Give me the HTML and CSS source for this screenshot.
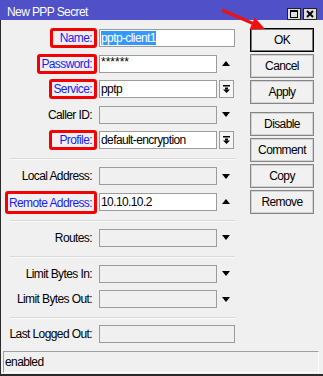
FILE: index.html
```html
<!DOCTYPE html>
<html lang="en">
<head>
    <meta charset="UTF-8">
    <meta name="viewport" content="width=device-width, initial-scale=1.0">
    <title>New PPP Secret</title>
    <link rel="stylesheet" href="styles.css">
</head>
<body>

<div class="window">
    <div class="titlebar">
        <span class="title">New PPP Secret</span>
        <div class="controls">
            <svg class="ctrl" width="14" height="12" viewBox="0 0 14 12">
                <rect x=".5" y=".5" width="13" height="11" fill="#dedede" stroke="#222"/>
                <rect x="3.5" y="2.5" width="7" height="7" fill="none" stroke="#000"/>
                <rect x="3" y="2" width="8" height="2" fill="#000"/>
            </svg>
            <svg class="ctrl" width="14" height="12" viewBox="0 0 14 12">
                <rect x=".5" y=".5" width="13" height="11" fill="#dedede" stroke="#222"/>
                <path d="M4 3l6 6M10 3l-6 6" stroke="#000" stroke-width="1.8"/>
            </svg>
        </div>
    </div>

    <div class="main">
        <div class="content">
            <div class="form">
                <div class="group">
                    <div class="row">
                        <div class="lbl"><span class="mark far">Name:</span></div>
                        <div class="field wide"><span class="sel">pptp-client1</span></div>
                    </div>
                    <div class="row">
                        <div class="lbl"><span class="mark">Password:</span></div>
                        <div class="field pass">******</div>
                        <span class="tri up"></span>
                    </div>
                    <div class="row">
                        <div class="lbl"><span class="mark">Service:</span></div>
                        <div class="field">pptp</div>
                        <span class="dd">
                            <svg width="7" height="8" viewBox="0 0 7 8">
                                <rect x="0" y="0" width="7" height="1.5" fill="#000"/>
                                <rect x="2" y="2.5" width="3" height="2" fill="#000"/>
                                <polygon points="0,4.5 7,4.5 3.5,8" fill="#000"/>
                            </svg>
                        </span>
                    </div>
                    <div class="row">
                        <div class="lbl">Caller ID:</div>
                        <div class="field off"></div>
                        <span class="tri down"></span>
                    </div>
                    <div class="row">
                        <div class="lbl"><span class="mark far">Profile:</span></div>
                        <div class="field">default-encryption</div>
                        <span class="dd">
                            <svg width="7" height="8" viewBox="0 0 7 8">
                                <rect x="0" y="0" width="7" height="1.5" fill="#000"/>
                                <rect x="2" y="2.5" width="3" height="2" fill="#000"/>
                                <polygon points="0,4.5 7,4.5 3.5,8" fill="#000"/>
                            </svg>
                        </span>
                    </div>
                </div>

                <div class="sep"></div>

                <div class="group">
                    <div class="row">
                        <div class="lbl">Local Address:</div>
                        <div class="field off"></div>
                        <span class="tri down"></span>
                    </div>
                    <div class="row">
                        <div class="lbl"><span class="mark tall">Remote Address:</span></div>
                        <div class="field">10.10.10.2</div>
                        <span class="tri up"></span>
                    </div>
                </div>

                <div class="sep"></div>

                <div class="group">
                    <div class="row">
                        <div class="lbl">Routes:</div>
                        <div class="field off"></div>
                        <span class="tri down"></span>
                    </div>
                </div>

                <div class="sep"></div>

                <div class="group">
                    <div class="row">
                        <div class="lbl">Limit Bytes In:</div>
                        <div class="field off"></div>
                        <span class="tri down"></span>
                    </div>
                    <div class="row">
                        <div class="lbl">Limit Bytes Out:</div>
                        <div class="field off"></div>
                        <span class="tri down"></span>
                    </div>
                </div>

                <div class="sep last"></div>

                <div class="group">
                    <div class="row">
                        <div class="lbl">Last Logged Out:</div>
                        <div class="field wide off"></div>
                    </div>
                </div>
            </div>

            <div class="buttons">
                <div class="btn default">OK</div>
                <div class="btn">Cancel</div>
                <div class="btn">Apply</div>
                <div class="btn spaced">Disable</div>
                <div class="btn">Comment</div>
                <div class="btn">Copy</div>
                <div class="btn">Remove</div>
            </div>
        </div>

        <div class="status">enabled</div>
    </div>

    <!-- red annotation arrow pointing at OK -->
    <svg class="pointer" width="323" height="40" viewBox="0 0 323 40">
        <line x1="222" y1="10" x2="253" y2="23.5" stroke="#f01010" stroke-width="3"/>
        <polygon points="265,29 249.5,29.5 254.8,17.6" fill="#f01010"/>
    </svg>
</div>

</body>
</html>
```

FILE: styles.css
```css
body {
    margin: 0;
    font-family: "Liberation Sans", Arial, sans-serif;
    font-size: 12px;
    letter-spacing: -0.6px;
    color: #000;
    background: #f0f0f0;
}
.window {
    position: relative;
    width: 323px;
    height: 376px;
    display: flex;
    flex-direction: column;
    background: #f0f0f0;
}
.titlebar {
    height: 20px;
    box-sizing: border-box;
    padding: 5px 6px 0 7px;
    background: #5050c8;
    display: flex;
    align-items: flex-start;
}
.title {
    flex: 1;
    color: #fff;
    line-height: 14px;
}
.controls {
    display: flex;
    gap: 2px;
    margin-top: 3px;
}
.ctrl {
    display: block;
}
.main {
    flex: 1;
    display: flex;
    flex-direction: column;
    border-left: 1px solid #2a2a2a;
    border-bottom: 2px solid #2a2a2a;
}
.content {
    display: flex;
    padding-top: 9px;
}
.form {
    width: 234px;
}
.group {
    display: flex;
    flex-direction: column;
    gap: 7.5px;
}
.row {
    display: flex;
    align-items: center;
    height: 18px;
}
.lbl {
    width: 91px;
    margin-right: 7px;
    display: flex;
    justify-content: flex-end;
    align-items: center;
    white-space: nowrap;
}
.mark {
    display: flex;
    align-items: center;
    height: 20px;
    box-sizing: border-box;
    border: 3px solid #f40000;
    border-radius: 3px;
    padding: 0 2px 0 1px;
    margin-right: -5px;
    color: #1c1cf0;
}
.mark.far {
    padding-left: 7px;
}
.mark.tall {
    height: 23px;
    margin-top: 2px;
}
.field {
    width: 118px;
    height: 18px;
    box-sizing: border-box;
    border: 1px solid #9c9c9c;
    background: #fff;
    padding-left: 1px;
    line-height: 16px;
    white-space: nowrap;
    overflow: hidden;
}
.field.wide {
    width: 136px;
}
.field.off {
    background: #f0f0f0;
}
.field.pass {
    letter-spacing: 0;
    line-height: 13px;
}
.sel {
    display: inline-block;
    background: #3399ff;
    color: #fff;
    line-height: 14px;
    margin-top: 1px;
    vertical-align: top;
}
.tri {
    width: 18px;
    display: flex;
    justify-content: center;
    align-items: center;
}
.tri::before {
    content: "";
    border-left: 4.5px solid transparent;
    border-right: 4.5px solid transparent;
}
.tri.up::before {
    border-bottom: 5px solid #000;
}
.tri.down::before {
    border-top: 5px solid #000;
}
.dd {
    width: 15px;
    height: 18px;
    margin-left: 2px;
    box-sizing: border-box;
    border: 1px solid #9c9c9c;
    background: #f6f6f6;
    display: flex;
    justify-content: center;
    align-items: center;
}
.dd svg {
    display: block;
}
.sep {
    width: 225px;
    height: 1px;
    margin: 9px 0 8px 9px;
    background: #d8d8d8;
    box-shadow: 0 1px 0 #fbfbfb;
}
.sep.last {
    margin-bottom: 7px;
}
.buttons {
    width: 64px;
    margin: -1px 0 0 15px;
    display: flex;
    flex-direction: column;
    gap: 2px;
}
.btn {
    height: 24px;
    box-sizing: border-box;
    border: 1px solid #858585;
    box-shadow: inset 0 0 0 1px #d2d2d2;
    background: #f1f1f1;
    display: flex;
    justify-content: center;
    align-items: center;
}
.btn.default {
    border-color: #000;
    box-shadow: inset 0 0 0 1px #7a7a7a;
}
.btn.spaced {
    margin-top: 6px;
}
.status {
    height: 22px;
    box-sizing: border-box;
    margin: 8px 4px 0 2px;
    border: 1px solid;
    border-color: #a0a0a0 #fcfcfc #fcfcfc #a0a0a0;
    padding-left: 1px;
    display: flex;
    align-items: center;
}
.pointer {
    position: absolute;
    top: 0;
    left: 0;
    pointer-events: none;
}
```
